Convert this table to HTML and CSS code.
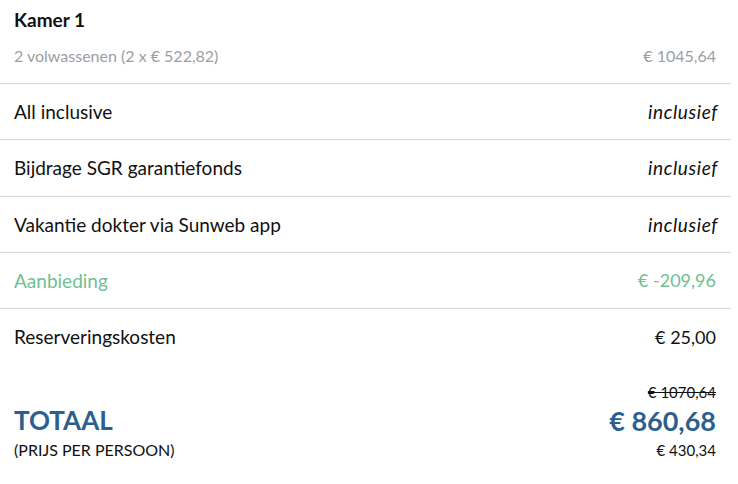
FILE: index.html
```html
<!DOCTYPE html>
<html lang="nl">
<head>
<meta charset="utf-8">
<link rel="stylesheet" href="styles.css">
</head>
<body>
<div class="summary">
  <div class="room">
    <div class="room-title">Kamer 1</div>
    <div class="line muted">
      <span>2 volwassenen (2 x € 522,82)</span>
      <span>€ 1045,64</span>
    </div>
  </div>
  <div class="row"><span>All inclusive</span><span class="incl">inclusief</span></div>
  <div class="row"><span>Bijdrage SGR garantiefonds</span><span class="incl">inclusief</span></div>
  <div class="row"><span>Vakantie dokter via Sunweb app</span><span class="incl">inclusief</span></div>
  <div class="row offer"><span>Aanbieding</span><span class="num">€ -209,96</span></div>
  <div class="row last"><span>Reserveringskosten</span><span class="num">€ 25,00</span></div>
  <div class="total">
    <div class="total-left">
      <div class="total-label">TOTAAL</div>
      <div class="per">(PRIJS PER PERSOON)</div>
    </div>
    <div class="total-right">
      <div class="old">€ 1070,64</div>
      <div class="amount">€ 860,68</div>
      <div class="per-amount">€ 430,34</div>
    </div>
  </div>
</div>
</body>
</html>
```
FILE: styles.css
```css
html, body {
  margin: 0;
  padding: 0;
  background: #fff;
}
body {
  font-family: "Source Sans Pro", Lato, "Open Sans", sans-serif;
  color: #111;
}
.summary {
  width: 731px;
}
.room {
  padding: 8px 15px 0 14px;
  height: 75px;
  border-bottom: 1px solid #d9d9d9;
}
.room-title {
  font-weight: 700;
  font-size: 19px;
  line-height: 24px;
}
.line {
  display: flex;
  justify-content: space-between;
  margin-top: 12px;
  font-size: 16px;
  line-height: 24px;
}
.muted { color: #9b9ea4; }
.row {
  display: flex;
  justify-content: space-between;
  align-items: center;
  height: 55.25px;
  padding: 0 15px 0 14px;
  border-bottom: 1px solid #d9d9d9;
  font-size: 19px;
}
.row.last { border-bottom: none; }
.num { font-size: 18px; }
.incl {
  font-style: italic;
  letter-spacing: 0.6px;
  margin-right: -2px;
}
.offer { color: #6fbf92; }
.total {
  display: flex;
  justify-content: space-between;
  align-items: flex-end;
  padding: 18px 15px 0 14px;
}
.total-label {
  font-size: 26px;
  font-weight: 700;
  color: #2c5f8f;
  line-height: 34px;
  padding-bottom: 3px;
}
.per {
  font-size: 16px;
  line-height: 20px;
}
.total-right {
  text-align: right;
}
.old {
  font-size: 15px;
  line-height: 20px;
  text-decoration: line-through;
}
.amount {
  font-size: 27px;
  font-weight: 700;
  color: #2c5f8f;
  line-height: 38px;
}
.per-amount {
  font-size: 15px;
  line-height: 20px;
}
```
